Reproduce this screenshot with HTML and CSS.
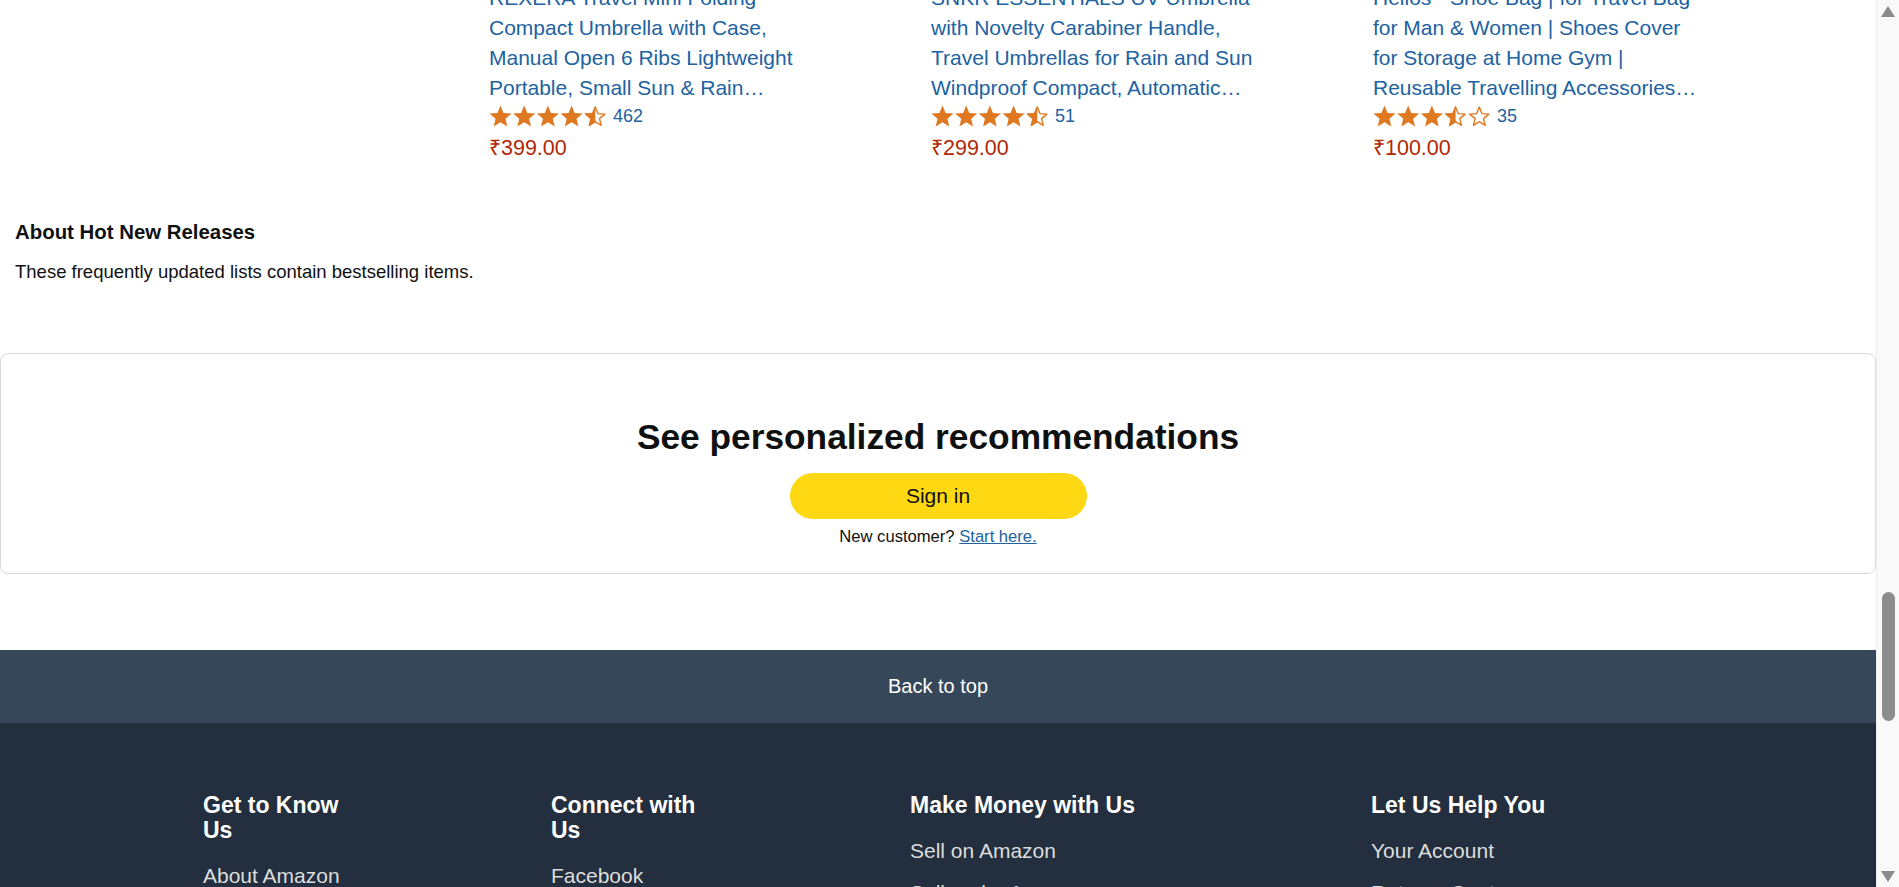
FILE: index.html
```html
<!DOCTYPE html>
<html lang="en">
<head>
<meta charset="utf-8">
<title>Hot New Releases</title>
<link rel="stylesheet" href="styles.css">
</head>
<body>
<svg class="sprite" width="0" height="0" aria-hidden="true">
  <defs>
    <clipPath id="left-half"><rect x="0" y="0" width="11.5" height="23"/></clipPath>
    <symbol id="star-full" viewBox="0 0 23 22">
      <path d="M11.5 0.5 L14.56 7.89 L22.53 8.52 L16.45 13.71 L18.32 21.48 L11.5 17.3 L4.68 21.48 L6.55 13.71 L0.47 8.52 L8.44 7.89 Z" fill="#DE7921"/>
    </symbol>
    <symbol id="star-half" viewBox="0 0 23 22">
      <path d="M11.5 1.9 L14.1 8.6 L21.1 9.1 L15.7 13.6 L17.4 20.3 L11.5 16.6 L5.6 20.3 L7.3 13.6 L1.9 9.1 L8.9 8.6 Z" fill="none" stroke="#DE7921" stroke-width="1.4" stroke-linejoin="round"/>
      <path d="M11.5 0.5 L14.56 7.89 L22.53 8.52 L16.45 13.71 L18.32 21.48 L11.5 17.3 L4.68 21.48 L6.55 13.71 L0.47 8.52 L8.44 7.89 Z" fill="#DE7921" clip-path="url(#left-half)"/>
    </symbol>
    <symbol id="star-empty" viewBox="0 0 23 22">
      <path d="M11.5 1.9 L14.1 8.6 L21.1 9.1 L15.7 13.6 L17.4 20.3 L11.5 16.6 L5.6 20.3 L7.3 13.6 L1.9 9.1 L8.9 8.6 Z" fill="none" stroke="#DE7921" stroke-width="1.4" stroke-linejoin="round"/>
    </symbol>
  </defs>
</svg>

<div class="window">
  <div class="page">
    <section class="products">
      <div class="card">
        <a class="title" href="#">REXERA Travel Mini Folding Compact Umbrella with Case, Manual Open 6 Ribs Lightweight Portable, Small Sun &amp; Rain…</a>
        <div class="rating">
          <svg class="stars" width="118" height="22" viewBox="0 0 118 22">
            <use href="#star-full" x="0" y="0" width="23" height="22"/>
            <use href="#star-full" x="23.7" y="0" width="23" height="22"/>
            <use href="#star-full" x="47.4" y="0" width="23" height="22"/>
            <use href="#star-full" x="71.1" y="0" width="23" height="22"/>
            <use href="#star-half" x="94.8" y="0" width="23" height="22"/>
          </svg>
          <a class="count" href="#">462</a>
        </div>
        <div class="price">₹399.00</div>
      </div>
      <div class="card">
        <a class="title" href="#">SNKR ESSENTIALS UV Umbrella with Novelty Carabiner Handle, Travel Umbrellas for Rain and Sun Windproof Compact, Automatic…</a>
        <div class="rating">
          <svg class="stars" width="118" height="22" viewBox="0 0 118 22">
            <use href="#star-full" x="0" y="0" width="23" height="22"/>
            <use href="#star-full" x="23.7" y="0" width="23" height="22"/>
            <use href="#star-full" x="47.4" y="0" width="23" height="22"/>
            <use href="#star-full" x="71.1" y="0" width="23" height="22"/>
            <use href="#star-half" x="94.8" y="0" width="23" height="22"/>
          </svg>
          <a class="count" href="#">51</a>
        </div>
        <div class="price">₹299.00</div>
      </div>
      <div class="card">
        <a class="title" href="#">Helios - Shoe Bag | for Travel Bag for Man &amp; Women | Shoes Cover for Storage at Home Gym | Reusable Travelling Accessories…</a>
        <div class="rating">
          <svg class="stars" width="118" height="22" viewBox="0 0 118 22">
            <use href="#star-full" x="0" y="0" width="23" height="22"/>
            <use href="#star-full" x="23.7" y="0" width="23" height="22"/>
            <use href="#star-full" x="47.4" y="0" width="23" height="22"/>
            <use href="#star-half" x="71.1" y="0" width="23" height="22"/>
            <use href="#star-empty" x="94.8" y="0" width="23" height="22"/>
          </svg>
          <a class="count" href="#">35</a>
        </div>
        <div class="price">₹100.00</div>
      </div>
    </section>

    <section class="about">
      <h2 class="about-title">About Hot New Releases</h2>
      <p class="about-text">These frequently updated lists contain bestselling items.</p>
    </section>

    <section class="recs">
      <h2 class="recs-title">See personalized recommendations</h2>
      <a class="signin" href="#">Sign in</a>
      <p class="newcust">New customer? <a href="#">Start here.</a></p>
    </section>

    <a class="backtop" href="#">Back to top</a>

    <footer class="footer">
      <div class="fcol c1">
        <h3 class="fhead">Get to Know Us</h3>
        <ul class="flinks">
          <li>About Amazon</li>
          <li>Careers</li>
          <li>Press Releases</li>
          <li>Amazon Science</li>
        </ul>
      </div>
      <div class="fcol c2">
        <h3 class="fhead">Connect with Us</h3>
        <ul class="flinks">
          <li>Facebook</li>
          <li>Twitter</li>
          <li>Instagram</li>
        </ul>
      </div>
      <div class="fcol c3">
        <h3 class="fhead">Make Money with Us</h3>
        <ul class="flinks">
          <li>Sell on Amazon</li>
          <li>Sell under Amazon Accelerator</li>
          <li>Protect and Build Your Brand</li>
          <li>Amazon Global Selling</li>
          <li>Supply to Amazon</li>
          <li>Become an Affiliate</li>
          <li>Fulfilment by Amazon</li>
          <li>Advertise Your Products</li>
          <li>Amazon Pay on Merchants</li>
        </ul>
      </div>
      <div class="fcol c4">
        <h3 class="fhead">Let Us Help You</h3>
        <ul class="flinks">
          <li>Your Account</li>
          <li>Returns Centre</li>
          <li>Recalls and Product Safety Alerts</li>
          <li>100% Purchase Protection</li>
          <li>Amazon App Download</li>
          <li>Help</li>
        </ul>
      </div>
    </footer>
  </div>

  <div class="scrollbar">
    <span class="arrow up"></span>
    <span class="thumb"></span>
    <span class="arrow down"></span>
  </div>
</div>
</body>
</html>
```

FILE: styles.css
```css
* { box-sizing: border-box; }

html, body {
  margin: 0;
  padding: 0;
  height: 887px;
  overflow: hidden;
  background: #fff;
  font-family: "Liberation Sans", Arial, sans-serif;
  color: #0F1111;
}

.sprite {
  position: absolute;
  width: 0;
  height: 0;
  overflow: hidden;
}

.window {
  display: flex;
  height: 887px;
  overflow: hidden;
}

.page {
  flex: 1;
  min-width: 0;
  display: flex;
  flex-direction: column;
  overflow: hidden;
}

.page > * { flex-shrink: 0; }

/* products (page is scrolled, first line partly hidden) */
.products {
  display: flex;
  gap: 112px;
  padding-left: 489px;
  margin-top: -17px;
}

.card {
  width: 330px;
  display: flex;
  flex-direction: column;
}

.title {
  font-size: 21px;
  line-height: 30px;
  height: 120px;
  color: #2162A1;
  text-decoration: none;
  overflow: hidden;
}

.rating {
  display: flex;
  align-items: center;
  gap: 6px;
  height: 26px;
}

.stars { display: block; }

.count {
  font-size: 18px;
  color: #2162A1;
  text-decoration: none;
  line-height: 22px;
}

.price {
  margin-top: 4px;
  font-size: 21.5px;
  line-height: 30px;
  color: #B12704;
}

/* about */
.about {
  margin-top: 56px;
  padding-left: 15px;
}

.about-title {
  margin: 0;
  font-size: 20.4px;
  line-height: 26px;
  font-weight: 700;
  color: #0F1111;
}

.about-text {
  margin: 15px 0 0;
  font-size: 18.5px;
  line-height: 24px;
  color: #0F1111;
}

/* personalized recommendations */
.recs {
  margin-top: 69px;
  border: 1px solid #D5D9D9;
  border-radius: 8px;
  padding: 62px 0 26px;
  display: flex;
  flex-direction: column;
  align-items: center;
}

.recs-title {
  margin: 0;
  font-size: 35.3px;
  line-height: 42px;
  font-weight: 700;
  color: #0F1111;
}

.signin {
  margin-top: 15px;
  width: 297px;
  height: 46px;
  border-radius: 23px;
  background: #FFD814;
  color: #0F1111;
  font-size: 21px;
  text-decoration: none;
  display: flex;
  align-items: center;
  justify-content: center;
}

.newcust {
  margin: 8px 0 0;
  font-size: 16.6px;
  line-height: 20px;
  color: #0F1111;
}

.newcust a {
  color: #2162A1;
  text-decoration: underline;
}

/* back to top */
.backtop {
  margin-top: 76px;
  height: 73px;
  background: #37475A;
  color: #fff;
  font-size: 20px;
  text-decoration: none;
  display: flex;
  align-items: center;
  justify-content: center;
}

/* footer */
.footer {
  flex: 1 0 auto;
  background: #232F3E;
  display: flex;
  align-items: flex-start;
  gap: 206px;
  padding: 69.5px 0 40px 203px;
}

.fcol.c1 { width: 142px; }
.fcol.c2 { width: 153px; }
.fcol.c3 { width: 255px; }
.fcol.c4 { width: 300px; }

.fhead {
  margin: 0;
  font-size: 23px;
  line-height: 25px;
  font-weight: 700;
  color: #fff;
}

.flinks {
  list-style: none;
  margin: 20px 0 0;
  padding: 0;
}

.flinks li {
  font-size: 21px;
  line-height: 25px;
  color: #DDDDDD;
  margin-bottom: 17px;
}

/* fake window scrollbar */
.scrollbar {
  width: 23px;
  flex: none;
  background: #F9F9F9;
  border-left: 1px solid #EDEDED;
  display: flex;
  flex-direction: column;
  align-items: center;
}

.arrow {
  width: 0;
  height: 0;
  border-left: 7.5px solid transparent;
  border-right: 7.5px solid transparent;
}

.arrow.up {
  margin-top: 6px;
  border-bottom: 11px solid #8A8A8A;
}

.arrow.down {
  margin-top: auto;
  margin-bottom: 5px;
  border-top: 11px solid #8A8A8A;
}

.thumb {
  margin-top: 575px;
  width: 13px;
  height: 129px;
  border-radius: 7px;
  background: #8C8C8C;
}
```
